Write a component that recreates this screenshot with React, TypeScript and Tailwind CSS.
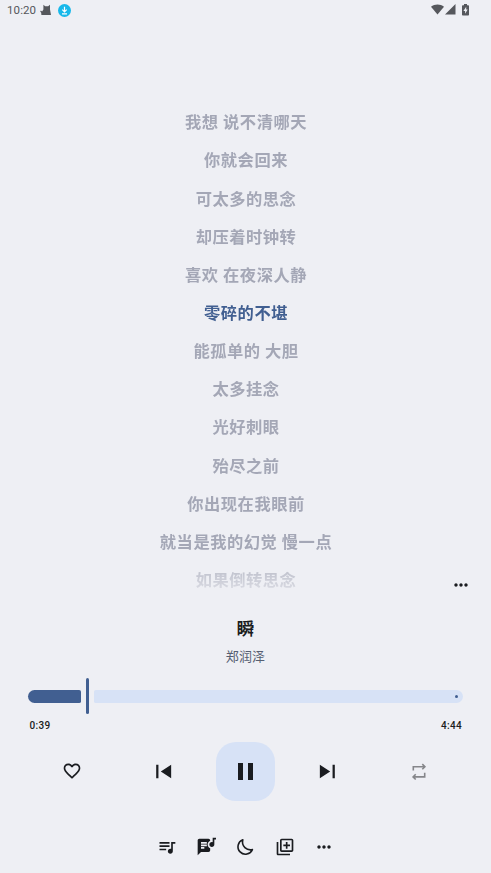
import React from 'react';
import {
  MdFavoriteBorder,
  MdLyrics,
  MdMoreHoriz,
  MdOutlineLibraryAdd,
  MdQueueMusic,
} from 'react-icons/md';

const lyrics = [
  '我想 说不清哪天',
  '你就会回来',
  '可太多的思念',
  '却压着时钟转',
  '喜欢 在夜深人静',
  '零碎的不堪',
  '能孤单的 大胆',
  '太多挂念',
  '光好刺眼',
  '殆尽之前',
  '你出现在我眼前',
  '就当是我的幻觉 慢一点',
  '如果倒转思念',
];

const activeLine = 5;

function StatusBar() {
  return (
    <header className="flex h-5 shrink-0 items-center pl-[7px] pr-[22px] text-[#55575c]">
      <span className="text-[11.5px] leading-5 tracking-[0.1px]">10:20</span>
      <svg width="12" height="12" viewBox="0 0 12 12" className="ml-[4px]" fill="currentColor">
        <path d="M3.4 5.4V.8l1.8 1.5h3L10 .8v4.6l1 5.6H1.4L1.2 8.8.2 7.6l.7-1 1.2 1Z" />
      </svg>
      <svg width="13" height="13" viewBox="0 0 13 13" className="ml-[6px]">
        <circle cx="6.5" cy="6.5" r="6.5" fill="#18b8ea" />
        <path d="M6.5 2.7v5M4.3 5.7l2.2 2.2 2.2-2.2M4 9.8h5" fill="none" stroke="#fff" strokeWidth="1.2" />
      </svg>
      <svg width="13" height="11" viewBox="0 0 13 11" className="mb-px ml-auto" fill="currentColor">
        <path d="M0 2.7C3.6-.4 9.4-.4 13 2.7L6.5 10.6Z" />
      </svg>
      <svg width="11" height="11" viewBox="0 0 11 11" className="mb-px ml-px" fill="currentColor">
        <path d="M0 10.5 10.5 0v10.5Z" />
      </svg>
      <svg width="7" height="12" viewBox="0 0 7 12" className="mb-px ml-[6px]">
        <path d="M2 0h3v1.2h1.2q.8 0 .8.8v8.7q0 .8-.8.8H.8q-.8 0-.8-.8V2q0-.8.8-.8H2Z" fill="currentColor" />
        <path d="M4.2 2.8 1.4 6.9h1.7v2.8l2.6-4.2H4.2Z" fill="#eeeff4" />
      </svg>
    </header>
  );
}

function SkipIcon({ className = '' }: { className?: string }) {
  return (
    <svg width="27" height="27" viewBox="0 0 24 24" fill="currentColor" className={className}>
      <path d="M5.5 18V6h2v12ZM18.8 18l-9.2-6 9.2-6Z" />
    </svg>
  );
}

function RepeatIcon() {
  return (
    <svg width="16" height="18" viewBox="0 0 16 18" fill="none" stroke="#85868a" strokeWidth="1.6">
      <path d="M2.3 7.6V3.7h11.4M11.3 1.1l2.6 2.6-2.6 2.6" />
      <path d="M13.7 9.8v4.1H2.1M4.7 11.3l-2.6 2.6 2.6 2.6" />
    </svg>
  );
}

function MoonIcon() {
  return (
    <svg width="18" height="18" viewBox="0 0 18 18" fill="none" stroke="currentColor" strokeWidth="1.6" strokeLinejoin="round" className="mr-px">
      <path d="M6.8 1.7A7.5 7.5 0 1 0 16.4 11.6C10.8 12.8 5.2 8.3 6.8 1.7Z" />
    </svg>
  );
}

function SeekBar() {
  return (
    <div className="flex h-9 items-center px-7">
      <div className="h-[13px] w-[53px] rounded-l-[7px] rounded-r-[2px] bg-[#415f91]" />
      <div className="ml-[5px] h-9 w-[3px] rounded-full bg-[#415f91]" />
      <div className="ml-[5px] flex h-[13px] flex-1 items-center justify-end rounded-l-[2px] rounded-r-[7px] bg-[#d7e2f6] pr-[5px]">
        <span className="size-[3px] rounded-full bg-[#415f91]" />
      </div>
    </div>
  );
}

export default function App() {
  return (
    <div className="flex h-[873px] w-[491px] flex-col overflow-hidden bg-[#eeeff4] font-[Roboto,'Noto_Sans_CJK_SC',sans-serif] text-[#1a1c20]">
      <StatusBar />

      {/* Lyrics */}
      <div className="relative h-[580px] shrink-0">
        <ul className="h-full pl-px pt-[84.2px] text-center text-[16.3px] font-bold tracking-[0.5px] text-[#a4a7b6] [mask-image:linear-gradient(to_bottom,black_530px,transparent_585px)]">
          {lyrics.map((line, i) => (
            <li
              key={line}
              className={i === activeLine ? 'h-[38.17px] leading-[38.17px] text-[#415f91]' : 'h-[38.17px] leading-[38.17px]'}
            >
              {line}
            </li>
          ))}
        </ul>
        <button className="absolute bottom-[5px] right-5">
          <MdMoreHoriz size={20} />
        </button>
      </div>

      {/* Track info */}
      <div className="flex h-[78px] shrink-0 flex-col items-center pt-[17px]">
        <h1 className="text-[17.5px] font-bold leading-6">瞬</h1>
        <p className="mt-[6px] text-[13px] leading-5 tracking-[0.2px] text-[#565e71]">郑润泽</p>
      </div>

      <SeekBar />
      <div className="flex h-[22px] shrink-0 items-center justify-between pl-[29.5px] pr-[29px] text-[10px] font-medium tracking-[0.3px]">
        <span>0:39</span>
        <span>4:44</span>
      </div>

      {/* Playback controls */}
      <div className="mt-[6px] grid h-[59px] shrink-0 grid-cols-[92px_91px_73px_91px_92px] place-items-center px-[26px]">
        <button className="mb-px">
          <MdFavoriteBorder size={20} />
        </button>
        <button>
          <SkipIcon />
        </button>
        <button className="flex size-[59px] items-center justify-center gap-[5px] rounded-[20px] bg-[#d7e2f6]">
          <span className="h-[17px] w-[5px] bg-[#1a1c20]" />
          <span className="h-[17px] w-[5px] bg-[#1a1c20]" />
        </button>
        <button>
          <SkipIcon className="rotate-180" />
        </button>
        <button>
          <RepeatIcon />
        </button>
      </div>

      {/* Bottom actions */}
      <nav className="mt-[26px] grid h-10 shrink-0 grid-cols-[repeat(5,39.2px)] place-items-center justify-center">
        <MdQueueMusic size={20} />
        <MdLyrics size={20} />
        <MoonIcon />
        <MdOutlineLibraryAdd size={20} />
        <MdMoreHoriz size={20} />
      </nav>
    </div>
  );
}
